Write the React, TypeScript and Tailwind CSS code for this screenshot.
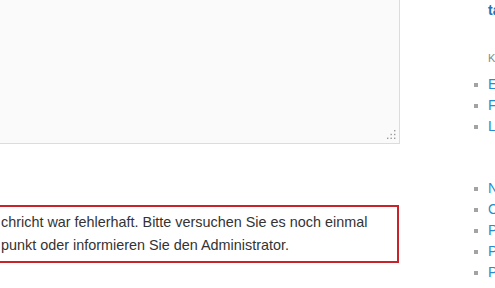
const listOne = ["Einträge", "Forum", "Links"]
const listTwo = ["Neuigkeiten", "Online", "Presse", "Projekte", "Partner"]

function Bullet({ label }: { label: string }) {
  return (
    <li className="flex h-[21px] items-center whitespace-nowrap">
      <span className="mr-[10px] h-[4px] w-[4px] shrink-0 bg-[#a3a3a3]" />
      <a className="text-[14px] text-[#2a8ccc]">{label}</a>
    </li>
  )
}

export default function App() {
  return (
    <div className="relative h-[288px] w-[495px] overflow-hidden bg-white font-['Liberation_Sans',Arial,sans-serif]">
      <div className="flex">
        <div className="-ml-[100px] flex w-[500px] shrink-0 flex-col">
          <div className="relative -mt-[60px] h-[204px] border border-[#dcdcdc] bg-[#fafafa]">
            <svg
              className="absolute bottom-[3px] right-[3px]"
              width="10"
              height="10"
              viewBox="0 0 10 10"
            >
              <g fill="#9a9a9a">
                <rect x="8" y="0" width="1.4" height="1.4" />
                <rect x="4.5" y="3.8" width="1.4" height="1.4" />
                <rect x="8" y="3.8" width="1.4" height="1.4" />
                <rect x="1" y="7.6" width="1.4" height="1.4" />
                <rect x="4.5" y="7.6" width="1.4" height="1.4" />
                <rect x="8" y="7.6" width="1.4" height="1.4" />
              </g>
            </svg>
          </div>

          <div className="mt-[61px] w-[499px] border-2 border-[#c8222a] pb-[4px] pl-[99px] pt-[4px] text-[14.4px] leading-[23px] text-[#333]">
            <p className="whitespace-nowrap">
              chricht war fehlerhaft. Bitte versuchen Sie es noch einmal
            </p>
            <p className="whitespace-nowrap">
              punkt oder informieren Sie den Administrator.
            </p>
          </div>
        </div>

        <aside className="ml-[74px] w-[200px] shrink-0">
          <p className="mt-[2px] pl-[14px] text-[14px] font-bold leading-[17px] text-[#1f73b7]">
            tags
          </p>
          <p className="mt-[32px] pl-[14px] text-[11px] uppercase leading-[14px] text-[#888]">
            Kategorien
          </p>
          <ul className="mt-[9px]">
            {listOne.map((item) => (
              <Bullet key={item} label={item} />
            ))}
          </ul>
          <ul className="mt-[41px]">
            {listTwo.map((item) => (
              <Bullet key={item} label={item} />
            ))}
          </ul>
        </aside>
      </div>
    </div>
  )
}
